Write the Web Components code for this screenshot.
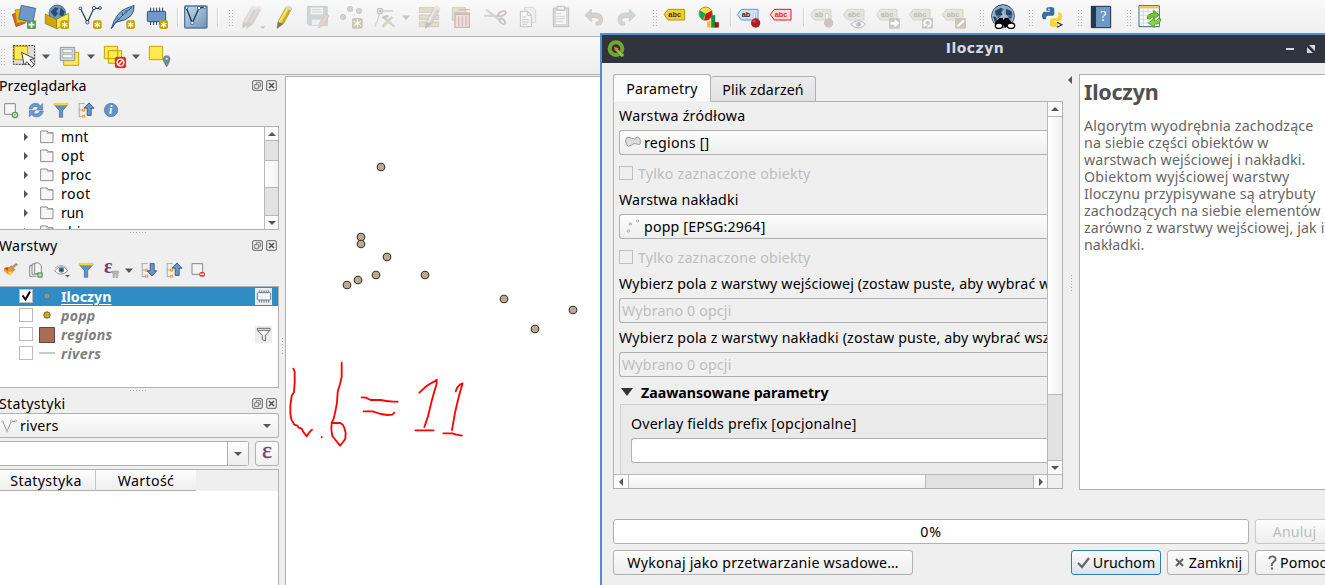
<!DOCTYPE html>
<html lang="pl"><head><meta charset="utf-8"><title>QGIS</title>
<style>
html,body{margin:0;height:100%;overflow:hidden;background:#efefef}
body{font:14.2px/19px "Noto Sans","Open Sans",sans-serif;color:#000}
</style></head><body>
<main-window>
 <tool-bar slot="bars" items="grip:0 layers:7 geopkg:9 vnew:9 feather:9 chip:10 sep:8 vlayer:6 sep:9 grip:10 pencils:8 pencil:8 save:9 points:10 vertex:9 caretoff:5 editrows:7 trash:8 scissors:10 copy:9 paste:9 undo:9 redo:9 grip:13 abc:5 pie:11 sep:9 abpin:6 abcred:8 sep:10 lab1:6 lab2:9 lab3:10 lab4:9 lab5:9 grip:12 globe:7 grip:13 python:8 grip:12 help:7 grip:13 table:7"></tool-bar>
 <tool-bar slot="bars" class="second" items="grip:0 select:7 caret:6 form:8 caret:5 desel:8 caret:5 loc:7"></tool-bar>

 <dock-panel slot="docks" style="height:154px" name="Przeglądarka" w="87" icons="newlayer:3 refresh:9 filter:9 collapse:9 info:9">
  <scroll-tree>
   <tree-row label="mnt" w="27"></tree-row><tree-row label="opt" w="23"></tree-row><tree-row label="proc" w="30"></tree-row>
   <tree-row label="root" w="29"></tree-row><tree-row label="run" w="22"></tree-row><tree-row label="sbin" w="28"></tree-row>
  </scroll-tree>
 </dock-panel>
 <split-dots slot="docks" style="height:6px"></split-dots>
 <dock-panel slot="docks" style="height:152px" name="Warstwy" w="58" icons="brush:3 addgroup:9 eye:10 filter:8 epsf:10 caret:5 expand:8 collapse:9 remove:9">
  <layer-list>
   <layer-row active label="Iloczyn" w="50" sym="pt1" badge="memory"></layer-row>
   <layer-row label="popp" w="34" sym="pt2"></layer-row>
   <layer-row label="regions" w="51" sym="sq" badge="funnel"></layer-row>
   <layer-row label="rivers" w="40" sym="ln"></layer-row>
  </layer-list>
 </dock-panel>
 <split-dots slot="docks" style="height:6px"></split-dots>
 <dock-panel slot="docks" style="flex:1" name="Statystyki" w="66"><stats-panel></stats-panel></dock-panel>

 <map-canvas slot="map"></map-canvas>
</main-window>

<tool-dialog>
 <tab-pane slot="left">
  <form-label text="Warstwa źródłowa" w="126"></form-label>
  <combo-box icon="poly" text="regions []" w="65"></combo-box>
  <check-line></check-line>
  <form-label text="Warstwa nakładki" w="119"></form-label>
  <combo-box icon="pts" text="popp [EPSG:2964]" w="121"></combo-box>
  <check-line></check-line>
  <form-label text="Wybierz pola z warstwy wejściowej (zostaw puste, aby wybrać w" w="431"></form-label>
  <option-field></option-field>
  <form-label style="height:29px;padding-bottom:0" text="Wybierz pola z warstwy nakładki (zostaw puste, aby wybrać wsz" w="430"></form-label>
  <option-field></option-field>
  <advanced-group></advanced-group>
 </tab-pane>
 <help-pane slot="help"></help-pane>
 <dialog-footer slot="foot"></dialog-footer>
</tool-dialog>

<script>
const badge=(x,y)=>`<rect x="${x}" y="${y}" width="26" height="26" rx="5" fill="#c9a20c"/><path d="M${x+13} ${y+4}v18M${x+5} ${y+8.5}l16 9M${x+5} ${y+17.5}l16-9" stroke="#fff" stroke-width="3.4"/>`;
const tag=(x,y,f,s,t,c,sz=19)=>`<path d="M${x} ${y+16}L${x+12} ${y}H${x+62}V${y+32}H${x+12}Z" fill="${f}" stroke="${s}" stroke-width="3"/><text x="${x+13}" y="${y+23}" font-family="Liberation Sans" font-weight="bold" font-size="${sz+3}" fill="${c}">${t}</text>`;
const pen=(x,a)=>`<path d="M${x} 85l3-20 24-43q10-6 17 4l-24 44z" fill="${a[0]}" stroke="${a[1]}" stroke-width="2"/><path d="M${x+8} 66l24-42" stroke="${a[2]}" stroke-width="5"/><path d="M${x+15} 70l24-42" stroke="${a[3]}" stroke-width="4"/><path d="M${x} 86l3-20 16 5z" fill="${a[4]}"/><path d="M${x+27} 20q8-7 18 4l-4 7-17-6z" fill="${a[5]}"/>`;
const GR=['#dedad8','#d4cfcd','#e6e2e0','#d6cdca','#d0cdcc','#e9e7e6'];
const tree=`<path d="M6 8h30M9 8v68M9 40h18M9 72h18" stroke="#999" stroke-width="4" fill="none"/><rect x="24" y="34" width="15" height="14" fill="#f79b1f"/><rect x="24" y="64" width="15" height="14" fill="#f79b1f"/><path d="M29 38h5v6h-5zM29 68h5v6h-5z" fill="#fde2b4"/>`;
const ICONS={
 layers:['36 15 72 72',`<path d="M37 43l28-10 11 36-28 11z" fill="#d9622b" stroke="#a33f13" stroke-width="2"/><path d="M45 30l30-5 7 40-32 5z" fill="#e8b90e" stroke="#a78307" stroke-width="2"/><path d="M64 16l43 9-8 42-43-10z" fill="#6f98c8" stroke="#3b6494" stroke-width="2.5"/><rect x="81" y="61" width="27" height="26" rx="4" fill="#5a9c5d"/><path d="M94.500 65v18M85.500 74h18" stroke="#fff" stroke-width="5"/>`],
 geopkg:['135 15 72 72',`<circle cx="172" cy="40" r="25" fill="#6f94bd" stroke="#244c73" stroke-width="2"/><path d="M152 35l14-13 9 3-6 9 5 7-10 10zM182 22l12 13-4 15-12-5z" fill="#274c70"/><path d="M136 42l34 16v28l-34-15z" fill="#cfa90c" stroke="#8c6f00" stroke-width="2"/><path d="M170 58l36-18v28l-36 18z" fill="#fce94f" stroke="#8c6f00" stroke-width="2"/>${badge(181,61)}`],
 vnew:['234 15 72 72',`<path d="M242 26l20 41 20-42h18" fill="none" stroke="#22394f" stroke-width="3.500"/><g fill="#eee" stroke="#22394f" stroke-width="2.500"><circle cx="241" cy="25" r="4"/><circle cx="262" cy="67" r="5"/><circle cx="282" cy="24" r="5"/><circle cx="300" cy="24" r="4"/></g>${badge(279,61)}`],
 feather:['333 15 72 72',`<path d="M334 86l7-20q13-30 36-40l25-10q2 18-9 31-15 15-39 18l-9 4z" fill="#83a9d2" stroke="#34557e" stroke-width="3"/><path d="M335 85q18-30 60-62M350 52l8 8M366 36l2 12M378 30l1 8" fill="none" stroke="#34557e" stroke-width="3"/>${badge(379,61)}`],
 chip:['435 15 72 72',`<path d="M452 23v52M461 23v52M470 23v52M479 23v52M488 23v52" stroke="#163e68" stroke-width="3"/><rect x="442" y="34" width="55" height="31" rx="3" fill="#6f98c8" stroke="#163e68" stroke-width="2.500"/>${badge(478,61)}`],
 vlayer:['552 15 72 72',`<defs><linearGradient id="g" x2="1" y2="1"><stop stop-color="#c7dbee"/><stop offset="1" stop-color="#6f92b6"/></linearGradient></defs><rect x="554" y="18" width="67" height="66" rx="3" fill="url(#g)" stroke="#54779f" stroke-width="4"/><path d="M559 24l18 45 20-45 18-3" fill="none" stroke="#1d3854" stroke-width="4"/><g fill="#fff" stroke="#1d3854" stroke-width="2"><circle cx="560" cy="23" r="4"/><circle cx="577" cy="69" r="5"/><circle cx="597" cy="24" r="5"/><circle cx="614" cy="22" r="4"/></g>`],
 pencils:['723 15 72 72',pen(740,GR)+pen(727,GR)+`<path d="M781 79h16l-8 8z" fill="#c4c4c4"/>`],
 pencil:['819 15 72 72',pen(831,['#e8cf35','#9b8a2c','#f5e46d','#c3a716','#777','#d5d5d5'])],
 save:['228 15 72 72',`<path d="M232 19h57q3 0 3 3v54H237l-5-5z" fill="#cfd4d6" stroke="#bfc4c6" stroke-width="2"/><path d="M242 23h37v20h-37z" fill="#f4f4f4"/><path d="M246 29h29M246 36h29" stroke="#d0d0d0" stroke-width="3"/><path d="M246 59h26v16h-26z" fill="#eee"/><path d="M265 84l4-15 18-27 10 6-17 28z" fill="#e2d4d0" stroke="#cdc2c0" stroke-width="2"/>`],
 points:['330 15 72 72',`<g fill="#d2d4d4" stroke="#bfc2c2" stroke-width="2"><circle cx="339" cy="51" r="8"/><circle cx="360" cy="27" r="8"/><circle cx="387" cy="33" r="8"/></g><rect x="366" y="54" width="32" height="32" rx="5" fill="#cbc6b8"/><path d="M382 58v24M371 64l22 13M371 77l22-13" stroke="#fff" stroke-width="3"/><circle cx="382" cy="70" r="5" fill="#fff"/>`],
 vertex:['429 15 72 72',`<path d="M449 39q-4 22-15 40M456 33h33" fill="none" stroke="#cfd1d1" stroke-width="4"/><path d="M443 26h14v14h-14z" fill="#eee" stroke="#b7baba" stroke-width="3"/><circle cx="450" cy="33" r="3" fill="#aaa"/><path d="M458 49l35 31" stroke="#d0d1d0" stroke-width="7"/><path d="M487 51l-30 30" stroke="#d8d3c3" stroke-width="8"/><path d="M456 53q10-12 22-6l-13 12z" fill="#c7c9c9"/>`],
 editrows:['561 15 72 72',`<g fill="#dfddd0" stroke="#cfccb9" stroke-width="3"><path d="M568 23h58v14h-58zM568 45h58v14h-58zM568 66h58v14h-58z"/></g>${pen(586,['#e0dbd9','#c6c2c0','#eae6e4','#d4cdca','#c2bfbe','#e8e6e5'])}`],
 trash:['657 15 72 72',`<path d="M667 23h40v38h-40z" fill="#e0decf" stroke="#cfccb9" stroke-width="3"/><path d="M675 43h43v39h-43z" fill="#ecdfde" stroke="#d0b5b5" stroke-width="4"/><path d="M672 39h48M686 29h34M686 49v28M697 49v28M708 49v28" stroke="#d3b9b9" stroke-width="4"/>`],
 scissors:['759 15 72 72',`<path d="M762 47l44 1M768 29l40 30" stroke="#cfd3d3" stroke-width="6"/><ellipse cx="816" cy="41" rx="12" ry="6" transform="rotate(-25 816 41)" fill="none" stroke="#c9bfbf" stroke-width="5"/><ellipse cx="817" cy="64" rx="10" ry="6" transform="rotate(45 817 64)" fill="none" stroke="#c9bfbf" stroke-width="5"/>`],
 copy:['858 15 72 72',`<path d="M884 22h24l9 9v37h-33z" fill="#efefef" stroke="#d6d6d6" stroke-width="3"/><path d="M871 34h22l11 12v34h-33z" fill="#f7f7f7" stroke="#c0c0c0" stroke-width="3"/><path d="M892 34v12h12M876 51h12M876 59h22M876 66h22M876 73h16" fill="none" stroke="#c0c0c0" stroke-width="2.500"/>`],
 paste:['27 15 72 72',`<path d="M40 24h46v56H40z" fill="#ddd" stroke="#bfbfbf" stroke-width="3"/><path d="M46 31h34v43H46z" fill="#f7f7f7" stroke="#c6c6c6" stroke-width="2"/><path d="M51 19h23v11H51z" fill="#eee" stroke="#bfbfbf" stroke-width="3"/><path d="M49 41h15M49 49h26M49 56h26M49 64h20" stroke="#c6c6c6" stroke-width="2.500"/>`],
 undo:['126 15 72 72',`<path d="M135 46l19-19v12h12q22 0 22 20 0 17-15 17l-5-1v-8q9-1 9-8 0-6-12-6h-11v12z" fill="#d8d0cc" stroke="#c9c2be" stroke-width="2"/>`],
 redo:['225 15 72 72',`<path d="M287 46l-19-19v12h-12q-22 0-22 20 0 17 15 17l5-1v-8q-9-1-9-8 0-6 12-6h11v12z" fill="#d0d6d2" stroke="#c4cac6" stroke-width="2"/>`],
 abc:['366 15 72 72',tag(372,28,'#efd02b','#b8960c','abc','#333')],
 pie:['471 15 72 72',`<circle cx="497" cy="41" r="20" fill="#fce03c" stroke="#333" stroke-width="1.500"/><path d="M497 41l-18-10q-5 20 10 29z" fill="#13a454"/><path d="M497 41l18-9q4 18-10 27l-13 2z" fill="#d01414"/><path d="M501 64h11v18h-11z" fill="#fcc10c"/><path d="M514 46h11v36h-11z" fill="#0b9845" stroke="#064" /><path d="M525 67h11v15h-11z" fill="#b40c0c" stroke="#600"/>`],
 abpin:['591 15 72 72',tag(592,28,'#cfe2f7','#5b9be0','ab','#222')+`<path d="M643 43v16" stroke="#aaa" stroke-width="9" stroke-linecap="round"/><path d="M643 42v15" stroke="#fff" stroke-width="5" stroke-linecap="round"/><circle cx="647" cy="69" r="14" fill="#ac2222"/><circle cx="643" cy="64" r="4" fill="#d05050"/>`],
 abcred:['687 15 72 72',tag(691,28,'#f9dede','#f11','abc','#e22')],
 lab1:['810 15 72 72',tag(811,28,'#e5e5dc','#d5d5ca','ab','#bbb')+`<path d="M861 43v16" stroke="#c6c6c6" stroke-width="9" stroke-linecap="round"/><path d="M861 42v15" stroke="#fff" stroke-width="5"/><circle cx="866" cy="69" r="14" fill="#cbc3c3"/>`],
 lab2:['909 15 72 72',tag(910,28,'#e5e5dc','#d5d5ca','abc','#bbb')+`<path d="M932 73q23-22 45 0-22 22-45 0z" fill="#f4f4f4" stroke="#bbb" stroke-width="3"/><circle cx="956" cy="73" r="7" fill="#b8bec4"/>`],
 lab3:['81 15 72 72',tag(79,28,'#e5e5dc','#d5d5ca','abc','#bbb')+`<rect x="117" y="54" width="33" height="32" rx="4" fill="#c9c9c9"/><path d="M122 66h12v-8l14 12-14 12v-8h-12z" fill="#fff"/>`],
 lab4:['180 15 72 72',tag(178,28,'#e5e5dc','#d5d5ca','abc','#bbb')+`<rect x="216" y="54" width="33" height="32" rx="4" fill="#c9c9c9"/><path d="M226 75q-7-14 7-15 12 2 8 14-4 6-9 7" fill="none" stroke="#fff" stroke-width="5"/><path d="M220 67l2 13 11-5z" fill="#fff"/>`],
 lab5:['279 15 72 72',tag(277,28,'#e5e5dc','#d5d5ca','abc','#bbb')+`<rect x="315" y="54" width="33" height="32" rx="4" fill="#cbc8ba"/><path d="M321 81l3-8 16-14 4 5-15 14z" fill="#fff"/>`],
 globe:['423 15 72 72',`<circle cx="459" cy="48" r="34" fill="#8aa9cb" stroke="#1f3c5c" stroke-width="3"/><path d="M435 32l18-9 10 5-9 8 4 8-13 10-8-8zM468 26l16 7 5 15-9 9-12-14zM428 48l9 2 7 14-7 8zM472 60l12 2-7 12z" fill="#284767"/><path d="M425 48h68M459 15v64M436 22q-16 27 0 52M482 22q16 27 0 52" stroke="#d2deea" stroke-width="1.500" fill="none"/><path d="M448 54h10l3 7 4-7h10l12 17-22 12-5-8-6 8-20-12z" fill="#050505"/><g fill="#fff" stroke="#000" stroke-width="4"><ellipse cx="447" cy="77" rx="11" ry="8"/><ellipse cx="483" cy="77" rx="11" ry="8"/></g>`],
 python:['573 15 72 72',`<path d="M589 35V26q0-5 12-5t12 6v14q0 6-6 6h-12q-7 0-7 7v4h-6q-6-1-6-11 0-11 7-12h17v-3h-11z" fill="#366f9f"/><path d="M624 67v9q0 5-12 5t-12-6V61q0-6 6-6h12q7 0 7-7v-11h4q7 1 7 14 0 12-7 13h-17v3z" fill="#fdd23f"/><circle cx="597" cy="28" r="2.500" fill="#fff"/><path d="M621 67l15 7-15 8" fill="none" stroke="#333" stroke-width="3.500"/>`],
 help:['717 15 72 72',`<path d="M724 19h58v64h-58z" fill="#6e97c8" stroke="#222e3c" stroke-width="3"/><path d="M723 18h15v65h-15z" fill="#26384a"/><text x="750" y="64" font-family="Liberation Serif" font-size="44" fill="#fff">?</text>`],
 table:['864 15 72 72',`<path d="M867 17h61v63h-61z" fill="#fff" stroke="#36688e" stroke-width="3"/><path d="M868 22h59" stroke="#f5bf52" stroke-width="7"/><path d="M868 34h59M868 46h59M868 58h59M868 69h59M880 26v53M894 26v53M909 26v53" stroke="#a9cfe5" stroke-width="2"/><path d="M891 55q2-15 20-15v-9l17 14-17 13v-8q-10 0-11 7z" fill="#77c52b" stroke="#35800e" stroke-width="2"/><path d="M933 57q-2 16-20 16v9l-18-13 18-14v8q10 0 11-7z" fill="#91d637" stroke="#35800e" stroke-width="2"/>`],
 select:['36 132 72 72',`<rect x="40" y="137" width="64" height="56" fill="#ddd" stroke="#333" stroke-width="3" stroke-dasharray="6 3"/><path d="M43 139h40v40H43z" fill="#fdea4f" stroke="#c6a20b" stroke-width="3"/><path d="M65 157l7 37 9-9 14 17 8-7-13-16 13-3z" fill="#fff" stroke="#444" stroke-width="3"/>`],
 form:['174 132 72 72',`<path d="M191 157h45v39h-45z" fill="#fdea4f" stroke="#c6a20b" stroke-width="3"/><path d="M181 142h43v40h-43z" fill="#d2d6d9" stroke="#8f989f" stroke-width="3"/><path d="M188 149h29v8h-29zM188 164h29v9h-29z" fill="#fff" stroke="#8f989f" stroke-width="2"/>`],
 desel:['309 132 72 72',`<path d="M313 139h40v37h-40zM325 152h40v38h-40z" fill="#fdea4f" stroke="#c6a20b" stroke-width="3"/><rect x="346" y="172" width="31" height="31" rx="4" fill="#db2a2a" stroke="#b51616" stroke-width="2"/><circle cx="361.500" cy="187.500" r="10" fill="none" stroke="#fff" stroke-width="4"/><path d="M355 194l13-13" stroke="#fff" stroke-width="4"/>`],
 loc:['441 132 72 72',`<path d="M448 139h40v40h-40z" fill="#fdea4f" stroke="#c6a20b" stroke-width="3"/><path d="M500 200q-12-18-10-25 2-8 10-8t10 8q1 8-10 25z" fill="#6d8da5" stroke="#4d6d87" stroke-width="2"/><circle cx="500" cy="176" r="3" fill="#fff"/>`],
 caret:['0 0 8 24','<path d="M0 10.500h8L4 15z" fill="#555"/>'],
 caretoff:['0 0 8 24','<path d="M0 10.500h8L4 15z" fill="#c4c4c4"/>'],
 newlayer:['9 81 48 48',`<path d="M14 86h32v32H14z" fill="#f6f6f6" stroke="#878787" stroke-width="3"/><circle cx="45" cy="120" r="8" fill="#fff" stroke="#57965a" stroke-width="4"/><path d="M45 115v10M40 120h10" stroke="#57965a" stroke-width="2"/>`],
 refresh:['84 81 48 48',`<path d="M87 102q3-17 20-17 10 0 14 7l7-6v19h-19l6-7q-14-9-19 4z" fill="#6c98cc" stroke="#3f6ea6" stroke-width="1.500"/><path d="M130 108q-3 17-20 18-10 0-15-7l-7 6v-19h19l-6 7q13 9 19-5z" fill="#6c98cc" stroke="#3f6ea6" stroke-width="1.500"/>`],
 filter:['0 0 48 48','<path d="M4 8h40L29 26v20H19V26z" fill="#6690c0" stroke="#44698f" stroke-width="2"/><path d="M3 4h42v6H3z" fill="#fbe033" stroke="#c0a50f"/>'],
 collapse:['3 0 80 80',tree+'<path d="M58 5l25 26H69v36H49V31H34z" fill="#6b95c8" stroke="#264e80" stroke-width="4"/>'],
 expand:['3 0 80 80',tree+'<path d="M58 70l24-26H69V8H49v36H34z" fill="#6b95c8" stroke="#264e80" stroke-width="4"/>'],
 info:['0 0 48 48','<circle cx="24" cy="24" r="20" fill="#6692c5" stroke="#4570a4" stroke-width="2"/><text x="18" y="37" font-family="Liberation Serif" font-style="italic" font-weight="bold" font-size="36" fill="#fff">i</text>'],
 brush:['9 81 48 48',`<path d="M12 98l17-3 12 14-10 12q-11-4-19-14z" fill="#f09a35"/><path d="M14 99l12-2-4 11z" fill="#dd332d"/><path d="M24 112l13-2-7 12z" fill="#fddc3b"/><path d="M30 97l11 11 4-4-5-6 13-9-4-4-13 9-3-2z" fill="#ba955d" stroke="#8d6b3c" stroke-width="1"/>`],
 addgroup:['84 81 48 48',`<path d="M97 92h-8v32h20M104 87h-8v31h18" fill="none" stroke="#777" stroke-width="2.500"/><path d="M104 84h12l8 8v24h-20z" fill="#f4f4f4" stroke="#777" stroke-width="2.500"/><rect x="112" y="112" width="16" height="16" rx="3" fill="#5a9c5d"/><path d="M120 115v10M115 120h10" stroke="#fff" stroke-width="2.500"/>`],
 eye:['160 81 52 48',`<path d="M162 107q24-26 43 1-25 22-43-1z" fill="#fff" stroke="#888" stroke-width="3"/><path d="M163 99q20-18 41 1" fill="none" stroke="#888" stroke-width="2"/><circle cx="184" cy="105" r="9" fill="#507fae"/><circle cx="184" cy="105" r="4" fill="#173a61"/><path d="M196 121h15l-7 8z" fill="#555"/>`],
 epsf:['312 81 48 48',`<text x="312" y="114" font-family="Liberation Serif" font-weight="bold" font-size="60" fill="#664370">ε</text><path d="M336 108h20v6l-3 4v10h-5v-12h-4v12h-5v-10l-3-4z" fill="#b5b5b5" stroke="#888"/>`],
 remove:['572 81 48 48',`<path d="M575 86h32v32h-32z" fill="#f4f4f4" stroke="#878787" stroke-width="3"/><rect x="597" y="111" width="17" height="14" rx="5" fill="#e33e42"/><path d="M600 118h11" stroke="#fff" stroke-width="4"/>`],
 vsmall:['0 0 48 48',`<path d="M6 12l12 28L31 10h14" stroke="#999" stroke-width="3" fill="none"/><g fill="#fff" stroke="#999" stroke-width="2"><circle cx="5" cy="11" r="3"/><circle cx="18" cy="39" r="3"/><circle cx="31" cy="9" r="3"/><circle cx="44" cy="9" r="3"/></g>`],
 poly:['0 0 48 48',`<path d="M4 9q8-6 16 1 8 5 18-4 10 2 8 15 1 11-10 6-8-5-17 4-10 7-15-3-4-11 0-19z" fill="#ddd" stroke="#999" stroke-width="3"/>`],
 pts:['0 0 48 48',`<g fill="#fff" stroke="#999" stroke-width="2.500"><circle cx="10" cy="36" r="3.500"/><circle cx="16" cy="15" r="3.500"/><circle cx="38" cy="6" r="3.500"/></g>`],
 folder:['0 0 42 42','<path d="M2 3h19l5 5h13v30H2z" fill="#f7f7f7" stroke="#777" stroke-width="2.500"/><path d="M21 3v7h18" fill="none" stroke="#999" stroke-width="2"/>'],
 memory:['0 0 51 51','<path d="M0 0h51v51H0z" fill="#e9edf1"/><path d="M13 7v37M20 7v37M27 7v37M34 7v37M41 7v37" stroke="#697e90" stroke-width="3"/><rect x="7" y="14" width="40" height="22" rx="3" fill="#f6f6f6" stroke="#697e90" stroke-width="3"/>'],
 funnel:['0 0 51 51','<path d="M0 0h51v51H0z" fill="#ececec"/><path d="M7 7h38v6L31 28v17l-9-4V28L7 13zM8 13h36" fill="#f6f6f6" stroke="#6b6b6b" stroke-width="3"/>'],
 float:['0 0 33 33','<rect x="2" y="2" width="29" height="29" rx="4" fill="none" stroke="#666" stroke-width="3"/><path d="M13 13V8h12v12h-5M8 14h12v11H8z" fill="none" stroke="#666" stroke-width="2.500"/>'],
 close:['0 0 33 33','<rect x="2" y="2" width="29" height="29" rx="4" fill="none" stroke="#666" stroke-width="3"/><path d="M9 9l15 15M24 9L9 24" stroke="#555" stroke-width="5"/>'],
 qgis:['200 117 54 54','<circle cx="227" cy="143" r="19" fill="none" stroke="#71aa2a" stroke-width="12"/><path d="M225 141l27 17v10h-9l-20-21z" fill="#2f6e24"/><path d="M227 140l24 22-7 6-19-21z" fill="#94c654"/><path d="M221 137l14 5-5 8-7-3z" fill="#ee7924"/>']
};
const svg=(n,w,h)=>`<svg width="${w}" height="${h}" viewBox="${ICONS[n][0]}" style="display:block;flex:none;overflow:visible">${ICONS[n][1]}</svg>`;
const T=(t,w,st='')=>`<fit-text w="${w}" style="${st}">${t}</fit-text>`;
const tri=(d,c='#555')=>`<svg width="8" height="8" viewBox="0 0 8 8" style="display:block;flex:none"><path fill="${c}" d="${{u:'M0 6h8L4 2z',d:'M0 2h8L4 6z',l:'M6 0v8L2 4z',r:'M2 0v8L6 4z'}[d]}"/></svg>`;
function define(name,css,html){
 customElements.define(name,class extends HTMLElement{
  connectedCallback(){
   if(this.shadowRoot)return;
   this.attachShadow({mode:'open'}).innerHTML=`<style>*{box-sizing:border-box}:host{box-sizing:border-box}${css}</style>`+(typeof html==='function'?html(this,k=>this.getAttribute(k)):html);
  }
 });
}
const GRAD='linear-gradient(#fdfdfd,#eee)';

define('main-window',`:host{display:flex;flex-direction:column;width:1325px;height:585px}
 .work{flex:1;display:grid;grid-template-columns:285px 1fr;min-height:0;padding-top:1px}
 .left{display:flex;flex-direction:column;min-height:0;min-width:0;position:relative}
 .handle{position:absolute;right:1px;top:262px}`,
 `<slot name="bars"></slot><div class="work"><div class="left"><slot name="docks"></slot><svg class="handle" width="3" height="18"><path d="M1.500 0v18" stroke="#aaa" stroke-dasharray="1 2"/></svg></div><slot name="map"></slot></div>`);

define('tool-bar',`:host{display:flex;align-items:flex-start;height:37px;padding-top:5px;background:linear-gradient(#f9f9f9,#eee);border-bottom:1px solid #b1b1b1;flex:none}
 :host(.second){height:38px;padding-top:7px}
 .sep{width:1px;height:19px;background:#d0d0d0;margin-top:3px;flex:none;box-shadow:1px 0 #fff}
 .grip{width:5px;height:18px;margin-top:4px;flex:none;background:radial-gradient(circle,#b5b5b5 .7px,transparent .8px) 0 0/3px 3px}`,
 (e,a)=>a('items').split(' ').map(i=>{const[n,g]=i.split(':');
  return n==='sep'||n==='grip'?`<div class="${n}" style="margin-left:${g}px"></div>`:`<div style="margin-left:${g}px">${svg(n,n.startsWith('caret')?8:24,24)}</div>`}).join(''));

define('dock-panel',`:host{display:flex;flex-direction:column;width:279px;min-height:0;flex:none}
 header{display:flex;align-items:center;height:19px;flex:none;padding-right:2px}
 header fit-text{flex:1;margin-left:-1px} .b{display:flex;gap:3px}
 nav{display:flex;align-items:center;height:31px;padding-bottom:1px;flex:none}
 section{flex:1;min-height:0;display:flex;flex-direction:column}`,
 (e,a)=>`<header>${T(a('name'),a('w'))}<div class="b">${svg('float',11,11)}${svg('close',11,11)}</div></header>${a('icons')?`<nav>${a('icons').split(' ').map(i=>{const[n,g]=i.split(':');return`<div style="margin-left:${g}px">${svg(n,n==='caret'?8:16,n==='caret'?24:16)}</div>`}).join('')}</nav>`:''}<section><slot></slot></section>`);

define('split-dots',`:host{display:flex;align-items:center;justify-content:center;width:276px;flex:none}`,`<svg width="17" height="2"><path d="M0 .5h17" stroke="#aaa" stroke-dasharray="1 2"/></svg>`);

define('scroll-tree',`:host{display:grid;grid-template-columns:1fr 14px;height:104px;background:#fff;border:1px solid #b0b0b0;border-left:0}
 .rows{overflow:hidden;height:102px}
 .bar{display:flex;flex-direction:column;border-left:1px solid #b8b8b8;background:#e2e2e2}
 .btn{height:14px;display:flex;align-items:center;justify-content:center;background:#fbfbfb}
 .up{border-bottom:1px solid #b8b8b8}.dn{border-top:1px solid #b8b8b8;margin-top:auto}
 .h{margin-top:19px;height:28px;background:linear-gradient(90deg,#fff,#f2f2f2);border:solid #b8b8b8;border-width:1px 0}`,
 `<div class="rows"><slot></slot></div><div class="bar"><div class="btn up">${tri('u')}</div><div class="h"></div><div class="btn dn">${tri('d')}</div></div>`);

define('tree-row',`:host{display:flex;align-items:center;height:19px;padding-left:22px}.f{margin:0 7px 0 10px}`,
 (e,a)=>`${tri('r')}<div class="f">${svg('folder',14,14)}</div>${T(a('label'),a('w'))}`);

define('layer-list',`:host{display:block;height:102px;background:#fff;border:1px solid #b0b0b0;border-left:0}`,`<slot></slot>`);

define('layer-row',`:host{display:flex;align-items:center;height:19px;padding:0 6px 0 19px;font-weight:bold;font-style:italic;color:#808080}
 :host([active]){background:#308cc6;color:#fff;font-style:normal}
 .c{width:14px;height:14px;background:#fff;border:1px solid #bbb;flex:none;margin-bottom:1px}.c svg{display:block}
 .s{width:16px;margin:0 7px 0 6px;display:flex;justify-content:center}
 .n{flex:1;display:flex;margin-left:-1px}`,
 (e,a)=>`<div class="c">${e.hasAttribute('active')?'<svg width="12" height="12"><path d="M2.500 5.500l3 4L10 1.500" fill="none" stroke="#000" stroke-width="2"/></svg>':''}</div>
 <div class="s"><svg width="16" height="16">${{pt1:'<circle cx="8" cy="7" r="3.200" fill="#7d9aa0" stroke="#4f7689"/>',pt2:'<circle cx="8" cy="7" r="3.200" fill="#d5a82d" stroke="#76621f"/>',sq:'<path d="M.5.5h15v15H.5z" fill="#a66e55" stroke="#6b4433"/>',ln:'<path d="M0 7h16" stroke="#c0d1bf" stroke-width="2"/>'}[a('sym')]}</svg></div>
 <div class="n">${T(a('label'),a('w'),e.hasAttribute('active')?'text-decoration:underline;text-underline-offset:2px':'')}</div>${a('badge')?svg(a('badge'),17,17):''}`);

define('stats-panel',`:host{display:flex;flex-direction:column;flex:1}
 .combo{height:25px;display:flex;align-items:center;background:${GRAD};border:1px solid #b1b1b1;border-left:0;border-radius:0 3px 3px 0;padding:0 7px 0 1px;gap:3px}
 .combo fit-text{flex:1}.row{display:flex;gap:6px;margin-top:3px;height:25px}
 .in{flex:1;display:flex;border:1px solid #b1b1b1;border-left:0;border-radius:0 3px 3px 0;background:#fff}
 .in i{margin-left:auto;width:21px;border-left:1px solid #b1b1b1;display:flex;align-items:center;justify-content:center;background:${GRAD}}
 .e{width:24px;border:1px solid #b1b1b1;border-radius:3px;background:${GRAD};text-align:center;font:24px/17px "Liberation Serif";color:#664370;-webkit-text-stroke:.3px #664370}
 .t{margin-top:3px;flex:1;border:1px solid #b1b1b1;border-left:0;border-bottom:0;background:#fff}
 .h{display:flex;height:21px;background:#efefef}.h div{display:flex;align-items:center;justify-content:center;background:${GRAD};border-bottom:1px solid #b1b1b1;width:100px}.h div:first-child{width:96px;border-right:1px solid #c4c4c4;padding-right:3px}`,
 `<div class="combo">${svg('vsmall',16,16)}${T('rivers',38)}${tri('d')}</div><div class="row"><div class="in"><i>${tri('d')}</i></div><div class="e">ε</div></div>
 <div class="t"><div class="h"><div>${T('Statystyka',71)}</div><div>${T('Wartość',56)}</div></div></div>`);

define('map-canvas',`:host{display:block;border:1px solid #b1b1b1;border-width:1px 0 0 1px;background:#fff;overflow:hidden}svg{display:block}`,
 `<svg width="1039" height="508" viewBox="286 77 1039 508"><g fill="#b9ab8c" stroke="#33322e" stroke-width="1.100">${[[381,167],[361,237],[361,244],[387,257],[376,275],[358,280],[347,285],[425,275],[504,299],[573,310],[535,329]].map(p=>`<circle cx="${p[0]}" cy="${p[1]}" r="3.800"/>`).join('')}</g>
 <g transform="translate(285 350) scale(.33333)" fill="none" stroke="#f00" stroke-width="5.500" stroke-linecap="round" stroke-linejoin="round"><path d="M25 56l4 9v33l-2 28-7 12-4 29v24l3 17 9 16 9 3 4 6 9 3 5 10 10 13 9-13 7-7M110 261v1M170 38v43l-4 17-8 28-2 31-5 27-5 22-6 13-1 20 3 19 12 15 11 14 7-8 9-13 1-18-4-14-4-9-8-6h-24M230 142l12 1 15 7h30l17 3 20 2h14M236 184h27l24 8 20 3 15-1 6-6M403 128l17-16 14-10 13-7 8-6v12l-6 20-9 32-11 46-11 32M391 241h55M512 124l5-12 8-8 8-4-6 19-9 35-8 34-9 52M475 250h27l12 4 17 3"/></g></svg>`);

define('tool-dialog',`:host{position:absolute;left:600px;top:33px;width:725px;height:552px;display:flex;flex-direction:column;border:solid #4a90d9;border-width:2px 0 0 2px;background:#efefef;overflow:hidden}
 .bar{height:28px;flex:none;background:#2f343f;display:grid;grid-template-columns:20px 1fr 38px;align-items:center;padding:0 1px 0 5px;color:#d3dae3;font:bold 14px/20px "DejaVu Sans"}
 .bar>div:nth-child(2){display:flex;justify-content:center;padding:0 0 2px 37px}.win{display:flex;gap:12px}
 .mid{display:flex;padding:11px 0 0 11px;height:427px;flex:none}.gap{width:16px;flex:none;display:flex;flex-direction:column;align-items:center;padding:2px 2px 0 0;gap:191px}`,
 `<div class="bar"><div>${svg('qgis',18,18)}</div><div>${T('Iloczyn',58)}</div><div class="win"><svg width="8" height="10"><path d="M0 5h8" stroke="#d3dae3" stroke-width="2"/></svg><svg width="10" height="10"><path d="M3 1h6v6zM1 3v6h6z" fill="#d3dae3"/></svg></div></div>
 <div class="mid"><slot name="left"></slot><div class="gap">${tri('l')}<svg width="3" height="18" style="margin-left:2px"><path d="M1.500 0v18" stroke="#aaa" stroke-dasharray="1 2"/></svg></div><slot name="help"></slot></div><slot name="foot"></slot>`);

define('tab-pane',`:host{display:flex;flex-direction:column;width:450px;flex:none;height:415px}
 .tabs{display:flex;align-items:flex-end;height:27px;flex:none}
 .tabs div{display:flex;align-items:center;justify-content:center;border:1px solid #b1b1b1;border-radius:3px 3px 0 0}
 .on{width:98px;height:28px;margin-bottom:-1px;background:#fbfbfb;border-bottom-color:#f2f2f2!important;position:relative}
 .off{width:105px;height:25px;border-left:0!important;border-bottom:0!important;background:linear-gradient(#ececec,#e2e2e2);padding-top:1px}
 .pane{height:388px;border:1px solid #b1b1b1;display:grid;grid-template:1fr 14px/1fr 15px;min-height:0}
 .c{overflow:hidden;padding-left:5px;min-width:0;min-height:0;white-space:nowrap}
 .v{display:flex;flex-direction:column;border-left:1px solid #b8b8b8;background:#e2e2e2;min-height:0}
 .h{display:flex;border-top:1px solid #b8b8b8;background:#e2e2e2}
 .b{width:14px;height:14px;display:flex;align-items:center;justify-content:center;background:#fbfbfb;flex:none}.h .b{height:13px}
 .vh{height:279px;background:linear-gradient(90deg,#fff,#f0f0f0);border:solid #b8b8b8;border-width:1px 0}.hh{width:298px;background:linear-gradient(#fff,#f0f0f0);border:solid #b8b8b8;border-width:0 1px}
 .k{border:solid #b8b8b8;border-width:1px 0 0 1px}.l{margin-left:auto;border-left:1px solid #b8b8b8}.d{margin-top:auto;border-top:1px solid #b8b8b8}`,
 `<div class="tabs"><div class="on">${T('Parametry',71)}</div><div class="off">${T('Plik zdarzeń',81)}</div></div>
 <div class="pane"><div class="c"><slot></slot></div><div class="v"><div class="b">${tri('u')}</div><div class="vh"></div><div class="b d">${tri('d')}</div></div><div class="h"><div class="b">${tri('l')}</div><div class="hh"></div><div class="b l">${tri('r')}</div></div><div class="k"></div></div>`);

define('form-label',`:host{display:flex;align-items:center;height:28px;padding-bottom:2px}`,(e,a)=>T(a('text'),a('w')));
define('combo-box',`:host{display:flex;align-items:center;height:25px;border:1px solid #b1b1b1;border-right:0;border-radius:3px 0 0 3px;background:${GRAD};padding-left:5px;gap:3px}`,(e,a)=>svg(a('icon'),16,16)+T(a('text'),a('w')));
define('check-line',`:host{display:flex;align-items:center;height:31px;padding-top:5px;gap:5px;color:#bebebe}i{width:14px;height:14px;border:1px solid #c0c0c0}`,`<i></i>${T('Tylko zaznaczone obiekty',172)}`);
define('option-field',`:host{display:flex;align-items:center;height:25px;border:1px solid #b1b1b1;border-right:0;border-radius:3px 0 0 3px;padding-left:2px;color:#bebebe}`,T('Wybrano 0 opcji',109));
define('advanced-group',`:host{display:block}
 .t{display:flex;align-items:center;height:27px;padding:3px 0 0 2px;gap:8px;font-weight:bold}
 .g{margin-left:1px;height:90px;border:1px solid #d0d0d0;border-right:0;background:#eaeaea;padding:5px 0 0 10px}.l{height:28px;display:flex;align-items:center;padding-bottom:2px}.i{height:25px;background:#fff;border:1px solid #b1b1b1;border-right:0;border-radius:3px 0 0 3px}`,
 `<div class="t"><svg width="12" height="8"><path d="M0 0h12L6 8z" fill="#333"/></svg>${T('Zaawansowane parametry',187)}</div><div class="g"><div class="l">${T('Overlay fields prefix [opcjonalne]',225)}</div><div class="i"></div></div>`);

define('help-pane',`:host{display:block;flex:1;height:416px;background:#fff;border:1px solid #b1b1b1;border-right:0;padding:3px 0 0 4px;color:#666;line-height:17px;overflow:hidden}
 .h{font-weight:bold;font-size:21.500px;line-height:28px;color:#4f4f4f;margin-bottom:11px}`,
 `<div class="h">${T('Iloczyn',74)}</div>`+[['Algorytm wyodrębnia zachodzące',229],['na siebie części obiektów w',184],['warstwach wejściowej i nakładki.',221],['Obiektom wyjściowej warstwy',205],['Iloczynu przypisywane są atrybuty',231],['zachodzących na siebie elementów',236],['zarówno z warstwy wejściowej, jak i',240],['nakładki.',60]].map(l=>`<div>${T(...l)}</div>`).join(''));

define('push-button',`:host{display:flex;align-items:center;justify-content:center;height:25px;border:1px solid #b1b1b1;border-radius:3px;background:${GRAD};flex:none;white-space:nowrap}
 :host([primary]){border-color:#2a7fb0;background:linear-gradient(#fbfcfd,#dbe3ea)}:host([off]){color:#bebebe;border-color:#c8c8c8}`,`<slot></slot>`);
define('dialog-footer',`:host{display:flex;flex-direction:column;gap:6px;padding:29px 0 0 11px;width:840px}
 .r{display:flex;gap:6px}.p{width:636px;height:25px;border:1px solid #b1b1b1;border-radius:3px;background:#fff;display:flex;align-items:center;justify-content:center}svg{margin-right:3px}`,
 `<div class="r"><div class="p">${T('0%',21)}</div><push-button off style="width:83px;padding-right:4px">${T('Anuluj',43)}</push-button></div>
 <div class="r"><push-button style="width:300px;margin-right:152px">${T('Wykonaj jako przetwarzanie wsadowe…',271)}</push-button>
 <push-button primary style="width:90px"><svg width="13" height="13"><path d="M1 7l4 4 7-9" fill="none" stroke="#666" stroke-width="2.200"/></svg>${T('Uruchom',62)}</push-button>
 <push-button style="width:82px"><svg width="9" height="9" style="margin:0 5px 0 1px"><path d="M1 1l7 7M8 1L1 8" stroke="#666" stroke-width="2.200"/></svg>${T('Zamknij',53)}</push-button>
 <push-button style="width:83px;justify-content:flex-start;padding-left:11px"><svg width="10" height="16"><path d="M2 4q1-3 4-2.500 3 .5 2.500 3.500L5 8.500V11" fill="none" stroke="#666" stroke-width="1.800"/><circle cx="5" cy="13.500" r="1.200" fill="#666"/></svg>${T('Pomoc',46)}</push-button></div>`);

/* A single text line whose letter spacing is tuned so that it fills the given width. */
customElements.define('fit-text',class extends HTMLElement{
 connectedCallback(){
  if(this.shadowRoot)return;
  this.attachShadow({mode:'open'}).innerHTML='<style>:host{display:block;white-space:nowrap}span{display:inline-block;text-decoration:inherit}</style><span><slot></slot></span>';
  const s=this.shadowRoot.querySelector('span'),n=this.textContent.length,w=+this.getAttribute('w')+.5;
  s.style.letterSpacing=((w-s.getBoundingClientRect().width)/n).toFixed(3)+'px';
 }
});
</script></body></html>
